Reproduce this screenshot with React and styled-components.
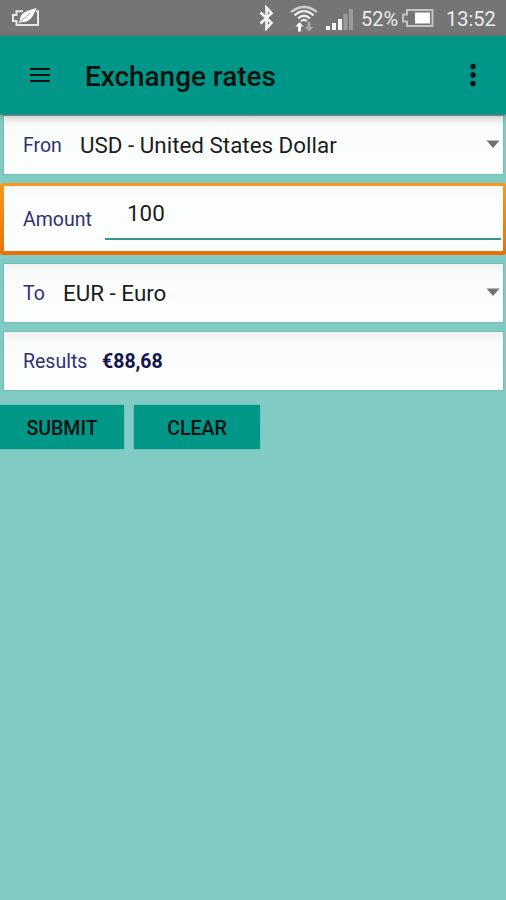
import React from "react";
import styled, { createGlobalStyle, css } from "styled-components";

const GlobalStyle = createGlobalStyle`
  *, *::before, *::after { box-sizing: border-box; }
  body { margin: 0; background: #80cbc4; font-family: Roboto, sans-serif; }
`;

const Screen = styled.div`
  width: 506px;
  height: 900px;
  display: flex;
  flex-direction: column;
  background: #80cbc4;
  overflow: hidden;
`;

const StatusBar = styled.header`
  height: 36px;
  flex: none;
  display: flex;
  align-items: center;
  padding: 0 11px;
  background: #757575;
  color: #ececec;
`;

const Spacer = styled.div`
  flex: 1;
`;

const StatusText = styled.span`
  font-size: 20px;
  line-height: 36px;
  height: 34px;
  white-space: nowrap;
  width: ${(p) => p.$width}px;
  margin-left: ${(p) => p.$gap}px;
`;

const StatusIcon = styled.svg`
  display: block;
  flex: none;
  margin-left: ${(p) => p.$gap || 0}px;
`;

const AppBar = styled.nav`
  height: 78px;
  flex: none;
  display: flex;
  align-items: center;
  padding: 0 28px 0 30px;
  background: #009688;
  color: #03110f;
  position: relative;
  box-shadow: 0 1px 2px rgba(0, 0, 0, 0.4), 0 3px 8px rgba(0, 0, 0, 0.2);
`;

const IconButton = styled.button`
  border: 0;
  padding: 0;
  background: none;
  color: inherit;
  display: flex;
`;

const Title = styled.h1`
  flex: 1;
  margin: 3px 0 0 35px;
  font-size: 27.9px;
  font-weight: 500;
  line-height: 36px;
`;

const Form = styled.main`
  display: flex;
  flex-direction: column;
`;

const Card = styled.section`
  display: flex;
  align-items: center;
  height: 58px;
  margin: ${(p) => p.$top}px 3px 0 4px;
  padding: 0 3px 0 19px;
  background: linear-gradient(#f1f3f3, #fafcfb 12px, #fbfefd);
  box-shadow: 0 0 1px 1px rgba(80, 150, 143, 0.22);
  ${(p) =>
    p.$focused &&
    css`
      height: 72px;
      margin: ${p.$top}px 0 0;
      padding: 0 2px 0 19px;
      border: 4px solid transparent;
      border-width: 3px 3px 4px 4px;
      border-radius: 3px;
      background: linear-gradient(#f6f8f8, #fbfefd 14px) padding-box,
        linear-gradient(#fa9a1c, #e96f04) border-box;
      box-shadow: none;
    `}
`;

const Label = styled.label`
  margin-top: 2px;
  color: #303074;
  font-size: 19.5px;
  line-height: 28px;
  width: ${(p) => p.$width}px;
  flex: none;
  white-space: nowrap;
`;

const Value = styled.span`
  flex: 1;
  color: #1b1d1d;
  font-size: 22.4px;
  line-height: 28px;
  white-space: nowrap;
`;

const Field = styled.div`
  flex: 1;
  align-self: flex-start;
  height: 54px;
  padding: 13px 0 0 22px;
  border-bottom: 2px solid #35988d;
  color: #1b1d1d;
  font-size: 22.4px;
  line-height: 28px;
`;

const Result = styled.output`
  margin-top: 2px;
  color: #13134f;
  font-size: 19.5px;
  font-weight: 700;
  line-height: 28px;
`;

const Caret = styled.svg`
  display: block;
  flex: none;
  margin-top: -1px;
`;

const Actions = styled.div`
  display: flex;
  gap: 10px;
  margin-top: 15px;
`;

const ActionButton = styled.button`
  width: ${(p) => p.$width}px;
  height: 44px;
  padding: 4px 0 0;
  border: 0;
  background: #009688;
  color: #03110f;
  font: 500 19.5px/28px Roboto, sans-serif;
  box-shadow: 0 0 1px rgba(0, 120, 108, 0.6);
`;

const DropdownCaret = () => (
  <Caret width="14" height="9" viewBox="0 0 14 9">
    <path d="M0.5 0.5h13L7 8z" fill="#707272" />
  </Caret>
);

function StatusIcons() {
  return (
    <>
      <StatusIcon $gap={219} width="15" height="26" viewBox="0 0 15 26">
        <path
          d="M1.5 7.5 12.5 17.8 7.5 23.3V2.7L12.5 8.2 1.5 18.5"
          fill="none"
          stroke="#f4f4f4"
          strokeWidth="2.6"
        />
      </StatusIcon>
      <StatusIcon $gap={16} width="28" height="30" viewBox="0 0 28 30">
        <g fill="none" stroke="#eeeeee" strokeWidth="2.2">
          <path d="M1 9Q14-1 27 9" strokeOpacity=".75" />
          <path d="M4.5 12.3Q14 4 23.5 12.3" />
          <path d="M8 15.5Q14 10 20 15.5" />
          <path d="M11 18.2Q14 15.7 17 18.2" />
        </g>
        <path d="M9.5 19 13.5 23.5H11V28.500H8v-5H5.500z" fill="#fff" />
        <path d="M19 28.500 14.800 24h2.700v-5h3v5h2.700z" fill="#a9a9a9" />
      </StatusIcon>
      <StatusIcon $gap={8} width="28" height="26" viewBox="0 0 28 26">
        <path d="M0 21h4v4H0zM6 18h4v7H6zM12 14h4v11h-4z" fill="#f6f6f6" />
        <path d="M17.500 9h4v16h-4zM23 4h4v21h-4z" fill="#9c9c9c" />
      </StatusIcon>
    </>
  );
}

export default function App() {
  return (
    <>
      <GlobalStyle />
      <Screen>
        <StatusBar>
          <StatusIcon width="29" height="20" viewBox="0 0 29 20">
            <path
              d="M12 3.3H5.500V7H2v6h3.500v4h21.500V3.300h-2"
              fill="none"
              stroke="#e8e8e8"
              strokeWidth="2"
            />
            <path d="M25.500 0C22 9 18 15 11 14L7.500 15.500 9 11.800C9 5 16 2.500 25.500 0z" fill="#fff" />
            <path d="M9 13.500Q14 10 19 5" fill="none" stroke="#858585" strokeWidth=".8" />
          </StatusIcon>
          <StatusIcons />
          <StatusText $gap={7} $width={37}>52%</StatusText>
          <StatusIcon $gap={3} width="33" height="20" viewBox="0 0 33 20">
            <path d="M6 2h25.500v16H6V13.500H2v-7h4z" fill="none" stroke="#c4c4c4" strokeWidth="2" />
            <path d="M14 4.500h15v11H14z" fill="#fff" />
          </StatusIcon>
          <Spacer />
          <StatusText $gap={0} $width={49}>13:52</StatusText>
        </StatusBar>
        <AppBar>
          <IconButton aria-label="Menu">
            <svg width="20" height="16" viewBox="0 0 20 16">
              <path d="M0 2h20M0 8h20M0 14h20" stroke="currentColor" strokeWidth="1.8" />
            </svg>
          </IconButton>
          <Title>Exchange rates</Title>
          <IconButton aria-label="More options">
            <svg width="10" height="24" viewBox="0 0 10 24">
              <g fill="currentColor">
                <circle cx="5" cy="3.500" r="2.700" />
                <circle cx="5" cy="12" r="2.700" />
                <circle cx="5" cy="20.500" r="2.700" />
              </g>
            </svg>
          </IconButton>
        </AppBar>
        <Form>
          <Card $top={2}>
            <Label $width={57}>Fron</Label>
            <Value>USD - United States Dollar</Value>
            <DropdownCaret />
          </Card>
          <Card $top={9} $focused>
            <Label $width={82}>Amount</Label>
            <Field>100</Field>
          </Card>
          <Card $top={9}>
            <Label $width={40}>To</Label>
            <Value>EUR - Euro</Value>
            <DropdownCaret />
          </Card>
          <Card $top={10}>
            <Label $width={79}>Results</Label>
            <Result>€88,68</Result>
          </Card>
          <Actions>
            <ActionButton $width={124}>SUBMIT</ActionButton>
            <ActionButton $width={126}>CLEAR</ActionButton>
          </Actions>
        </Form>
      </Screen>
    </>
  );
}
